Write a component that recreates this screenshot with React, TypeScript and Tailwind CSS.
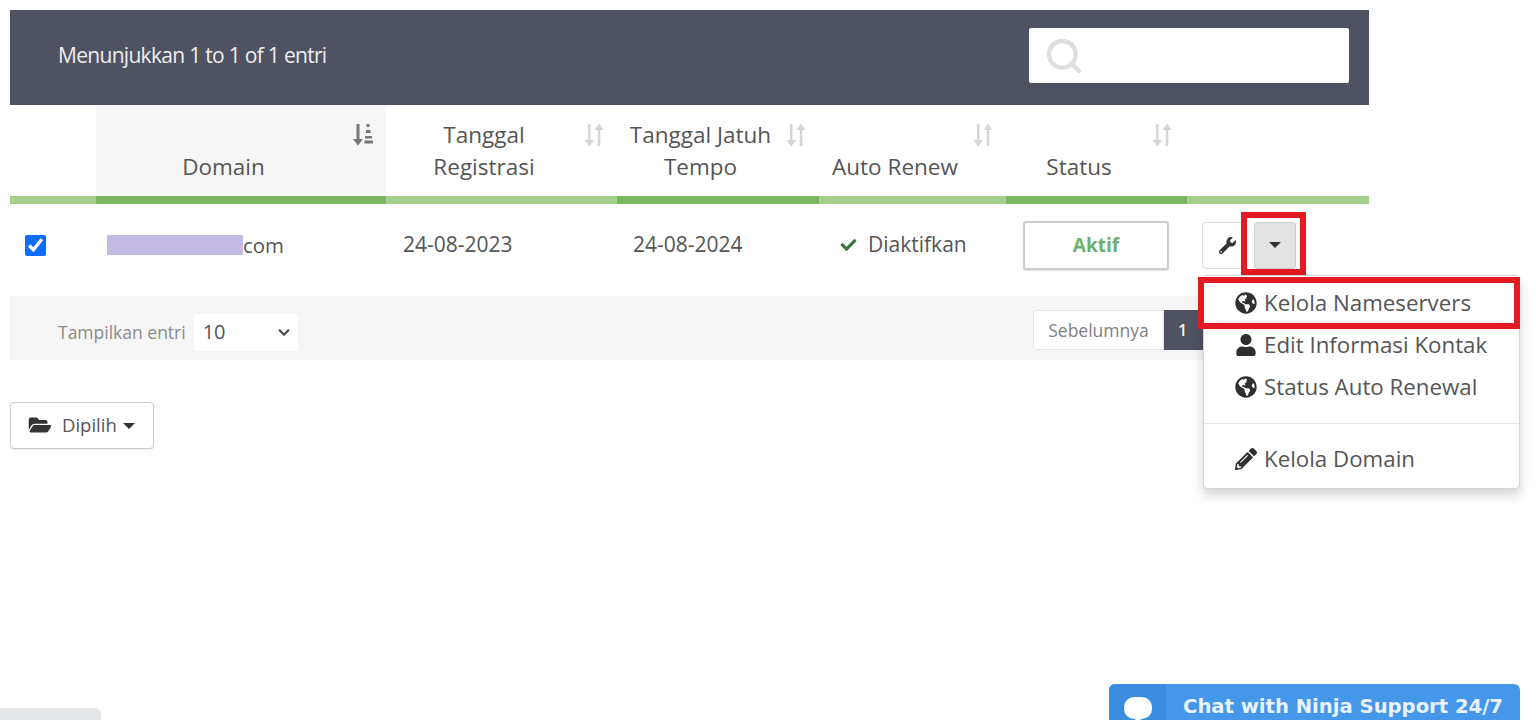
import { Search } from "lucide-react";
import {
  FaCheck,
  FaFolderOpen,
  FaGlobeAmericas,
  FaPencilAlt,
  FaUser,
  FaWrench,
  FaChevronDown,
} from "react-icons/fa";

function SortIcon() {
  return (
    <svg viewBox="0 0 22 24" className="absolute top-[18px] w-[22px] h-[24px] right-0 text-[#d6d6d6]" fill="currentColor">
      <path d="M5 1h2.500v16H11l-4.750 6.500L1.500 17H5z" />
      <path d="M16 .5L20.500 7H17.300v16h-2.500V7H11.500z" />
    </svg>
  );
}

function SortActiveIcon() {
  return (
    <svg viewBox="0 0 22 24" className="absolute top-[17px] w-[22px] h-[24px] right-[12px] text-[#777]" fill="currentColor">
      <path d="M4.500 2h3v15h3.500L6 23.500 1 17h3.500z" />
      <rect x="14.500" y="2" width="3" height="3" />
      <rect x="14" y="8" width="4.500" height="3" />
      <rect x="13" y="14" width="7" height="2.500" />
      <rect x="12.500" y="18.500" width="8.500" height="3" />
    </svg>
  );
}

const menuItems = [
  { label: "Kelola Nameservers", icon: <FaGlobeAmericas /> },
  { label: "Edit Informasi Kontak", icon: <FaUser /> },
  { label: "Status Auto Renewal", icon: <FaGlobeAmericas /> },
];

export default function App() {
  return (
    <div
      className="relative h-[720px] overflow-hidden bg-white text-[#555]"
      style={{ fontFamily: '"Open Sans", sans-serif' }}
    >
      <div className="w-[1369px] pt-[10px] pl-[10px]">
        {/* Table toolbar */}
        <div className="h-[95px] bg-[#4f5260] flex items-center justify-between pl-[48px] pr-[20px]">
          <span className="text-[21px] tracking-[-0.7px] text-[#eeeeee] mb-[4px]">Menunjukkan 1 to 1 of 1 entri</span>
          <div className="w-[320px] h-[55px] mb-[4px] bg-white rounded-[2px] flex items-center pl-[15px]">
            <Search className="w-[40px] h-[40px] text-[#dedede]" strokeWidth={2.6} />
          </div>
        </div>

        {/* Head */}
        <div className="grid grid-cols-[86px_290px_231px_202px_187px_181px_182px] h-[99px] text-[22.500px] leading-[32px] text-center">
          <div className="border-b-[8px] border-[#a5d18d]" />
          <div className="relative bg-[#f6f6f6] border-b-[8px] border-[#7ab65c] pr-[35px] flex items-end justify-center pb-[13px]">
            Domain
            <SortActiveIcon />
          </div>
          <div className="relative border-b-[8px] border-[#a5d18d] pr-[35px] flex items-end justify-center pb-[13px]">
            <span>Tanggal<br />Registrasi</span>
            <span className="absolute top-0 right-[12px] w-[22px] h-[60px]"><SortIcon /></span>
          </div>
          <div className="relative border-b-[8px] border-[#7ab65c] pr-[35px] flex items-end justify-center pb-[13px]">
            <span>Tanggal Jatuh<br />Tempo</span>
            <span className="absolute top-0 right-[12px] w-[22px] h-[60px]"><SortIcon /></span>
          </div>
          <div className="relative border-b-[8px] border-[#a5d18d] pr-[35px] flex items-end justify-center pb-[13px]">
            Auto Renew
            <span className="absolute top-0 right-[12px] w-[22px] h-[60px]"><SortIcon /></span>
          </div>
          <div className="relative border-b-[8px] border-[#7ab65c] pr-[35px] flex items-end justify-center pb-[13px]">
            Status
            <span className="absolute top-0 right-[14px] w-[22px] h-[60px]"><SortIcon /></span>
          </div>
          <div className="border-b-[8px] border-[#a5d18d]" />
        </div>

        {/* Row */}
        <div className="grid grid-cols-[86px_290px_231px_202px_187px_181px_182px] h-[92px] pb-[10px] items-center text-[21px]">
          <div className="pl-[15px] flex">
            <input type="checkbox" defaultChecked className="w-[21px] h-[21px] accent-[#0d6efd]" />
          </div>
          <div className="pl-[11px] flex items-center">
            <span className="w-[136px] h-[20px] bg-[#c3bbe3]" />
            <span className="text-[20.400px]">com</span>
          </div>
          <div className="pl-[17px]">24-08-2023</div>
          <div className="pl-[16px]">24-08-2024</div>
          <div className="pl-[20px] flex items-center gap-[10px]">
            <FaCheck className="w-[19px] h-[16px] text-[#3c763d]" />
            <span>Diaktifkan</span>
          </div>
          <div className="pl-[17px]">
            <div className="w-[146px] h-[49px] border-2 border-[#cccccc] rounded-[3px] flex items-center justify-center text-[19px] font-bold text-[#6cae6f] shadow-[0_1px_1px_rgba(0,0,0,0.12)]">
              Aktif
            </div>
          </div>
          <div className="pl-[15px] flex">
            <div className="w-[43px] h-[47px] border border-[#dddddd] rounded-l-[4px] flex items-center justify-center pl-[8px]">
              <FaWrench className="w-[17px] h-[17px] text-[#333]" />
            </div>
            <div className="ml-[9px] w-[42px] h-[47px] bg-[#e3e3e3] border border-[#cfcfcf] rounded-[3px] flex items-center justify-center">
              <span className="border-x-[6px] border-x-transparent border-t-[6px] border-t-[#333]" />
            </div>
          </div>
        </div>

        {/* Footer */}
        <div className="h-[64px] bg-[#f6f6f6] flex items-center justify-between pl-[48px]">
          <div className="flex items-center gap-[8px] mt-[8px]">
            <span className="text-[17.500px] text-[#8a8a8a]">Tampilkan entri</span>
            <div className="w-[104px] h-[37px] bg-white rounded-[3px] flex items-center justify-between pl-[9px] pr-[5px] text-[20px]">
              10
              <FaChevronDown className="w-[18px] h-[13px] text-[#444]" />
            </div>
          </div>
          <div className="flex h-[40px] mt-[4px]">
            <div className="w-[131px] bg-white border border-[#e6e6e6] rounded-l-[3px] flex items-center justify-center text-[17.500px] text-[#808080]">
              Sebelumnya
            </div>
            <div className="w-[205px] bg-[#4f5260] text-[#f2f2f2] text-[16px] font-semibold flex items-center pl-[14px]">1</div>
          </div>
        </div>

        <button className="mt-[42px] w-[144px] h-[47px] pb-[2px] border border-[#cccccc] rounded-[4px] bg-white flex items-center pl-[16px] text-[18.500px] text-[#555] shadow-[0_1px_1px_rgba(0,0,0,0.08)]">
          <FaFolderOpen className="w-[26px] h-[20px] text-[#333] mr-[9px]" />
          Dipilih
          <span className="ml-[6px] mt-[2px] border-x-[6px] border-x-transparent border-t-[6px] border-t-[#333]" />
        </button>
      </div>

      {/* Red marker on dropdown toggle */}
      <div className="absolute left-[1241px] top-[212px] w-[65px] h-[63px] border-[6px] border-[#e21a22]" />

      {/* Dropdown menu */}
      <div className="absolute left-[1203px] top-[275px] w-[317px] h-[214px] bg-white border border-[#d5d5d5] rounded-[4px] shadow-[0_6px_12px_rgba(0,0,0,0.175)] pt-[6px] text-[22.300px] text-[#555]">
        {menuItems.map((item) => (
          <div key={item.label} className="h-[42px] flex items-center pl-[31px] gap-[7px] whitespace-nowrap">
            <span className="text-[#2f2f2f] text-[22px]">{item.icon}</span>
            {item.label}
          </div>
        ))}
        <div className="mt-[15px] border-t border-[#e5e5e5]" />
        <div className="mt-[14px] h-[42px] flex items-center pl-[31px] gap-[7px]">
          <span className="text-[#2f2f2f] text-[22px]"><FaPencilAlt /></span>
          Kelola Domain
        </div>
      </div>

      {/* Red marker on first menu item */}
      <div className="absolute left-[1198px] top-[277px] w-[322px] h-[52px] border-[6px] border-[#e21a22]" />

      {/* Chat widget */}
      <div className="absolute left-[1109px] top-[684px] w-[411px] h-[40px] rounded-t-[6px] bg-[#4597ea] flex overflow-hidden">
        <div className="w-[57px] bg-[#3a8ddf] flex justify-center pt-[13px]">
          <svg viewBox="0 0 28 28" className="w-[28px] h-[28px] text-white" fill="currentColor">
            <path d="M10 0h8a10 10 0 0 1 10 10v2a10 10 0 0 1-10 10h-1l-3 5-3-5h-1A10 10 0 0 1 0 12v-2A10 10 0 0 1 10 0z" />
          </svg>
        </div>
        <span
          className="pl-[17px] pt-[9px] text-[19.600px] leading-[28px] font-bold text-[#e9f3fd] whitespace-nowrap"
          style={{ fontFamily: '"DejaVu Sans", sans-serif' }}
        >
          Chat with Ninja Support 24/7
        </span>
      </div>

      {/* Browser status chip, cut off by the window edge */}
      <div className="absolute left-0 top-[708px] w-[101px] h-[12px] bg-[#e4e6e8] rounded-tr-[6px] overflow-hidden" />
    </div>
  );
}
